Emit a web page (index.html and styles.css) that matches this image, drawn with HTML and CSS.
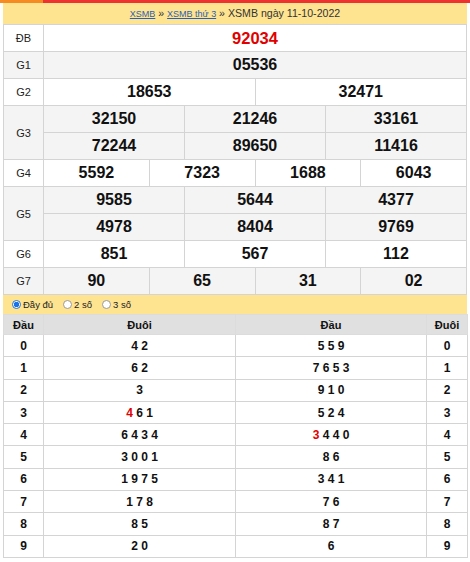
FILE: index.html
```html
<!DOCTYPE html>
<html lang="vi">
<head>
<meta charset="utf-8">
<title>XSMB ngày 11-10-2022</title>
<link rel="stylesheet" href="styles.css">
</head>
<body>
<div class="topbar"><span class="tb-orange"></span><span class="tb-red"></span></div>
<div class="wrap">
  <div class="crumb"><a href="#">XSMB</a> » <a href="#">XSMB thứ 3</a> » XSMB ngày 11-10-2022</div>
  <table class="kq">
    <colgroup>
      <col class="c-lbl">
      <col><col><col><col><col><col><col><col><col><col><col><col>
    </colgroup>
    <tr>
      <td class="lbl">ĐB</td>
      <td colspan="12" class="db">92034</td>
    </tr>
    <tr class="alt">
      <td class="lbl">G1</td>
      <td colspan="12">05536</td>
    </tr>
    <tr>
      <td class="lbl">G2</td>
      <td colspan="6">18653</td>
      <td colspan="6">32471</td>
    </tr>
    <tr class="alt">
      <td class="lbl" rowspan="2">G3</td>
      <td colspan="4">32150</td>
      <td colspan="4">21246</td>
      <td colspan="4">33161</td>
    </tr>
    <tr class="alt">
      <td colspan="4">72244</td>
      <td colspan="4">89650</td>
      <td colspan="4">11416</td>
    </tr>
    <tr>
      <td class="lbl">G4</td>
      <td colspan="3">5592</td>
      <td colspan="3">7323</td>
      <td colspan="3">1688</td>
      <td colspan="3">6043</td>
    </tr>
    <tr class="alt">
      <td class="lbl" rowspan="2">G5</td>
      <td colspan="4">9585</td>
      <td colspan="4">5644</td>
      <td colspan="4">4377</td>
    </tr>
    <tr class="alt">
      <td colspan="4">4978</td>
      <td colspan="4">8404</td>
      <td colspan="4">9769</td>
    </tr>
    <tr>
      <td class="lbl">G6</td>
      <td colspan="4">851</td>
      <td colspan="4">567</td>
      <td colspan="4">112</td>
    </tr>
    <tr class="alt">
      <td class="lbl">G7</td>
      <td colspan="3">90</td>
      <td colspan="3">65</td>
      <td colspan="3">31</td>
      <td colspan="3">02</td>
    </tr>
  </table>
  <div class="opts">
    <label class="opt"><span class="radio on"></span>Đầy đủ</label>
    <label class="opt"><span class="radio"></span>2 số</label>
    <label class="opt"><span class="radio"></span>3 số</label>
  </div>
  <table class="lt">
    <colgroup>
      <col class="w-d"><col class="w-m"><col class="w-m2"><col class="w-d2">
    </colgroup>
    <tr><th>Đầu</th><th>Đuôi</th><th class="sep">Đầu</th><th>Đuôi</th></tr>
    <tr><td>0</td><td>4 2</td><td class="sep">5 5 9</td><td>0</td></tr>
    <tr><td>1</td><td>6 2</td><td class="sep">7 6 5 3</td><td>1</td></tr>
    <tr><td>2</td><td>3</td><td class="sep">9 1 0</td><td>2</td></tr>
    <tr><td>3</td><td><span class="red">4</span> 6 1</td><td class="sep">5 2 4</td><td>3</td></tr>
    <tr><td>4</td><td>6 4 3 4</td><td class="sep"><span class="red">3</span> 4 4 0</td><td>4</td></tr>
    <tr><td>5</td><td>3 0 0 1</td><td class="sep">8 6</td><td>5</td></tr>
    <tr><td>6</td><td>1 9 7 5</td><td class="sep">3 4 1</td><td>6</td></tr>
    <tr><td>7</td><td>1 7 8</td><td class="sep">7 6</td><td>7</td></tr>
    <tr><td>8</td><td>8 5</td><td class="sep">8 7</td><td>8</td></tr>
    <tr><td>9</td><td>2 0</td><td class="sep">6</td><td>9</td></tr>
  </table>
</div>
</body>
</html>
```

FILE: styles.css
```css
* { box-sizing: border-box; }
body {
  margin: 0;
  background: #fff;
  font-family: "Liberation Sans", Arial, sans-serif;
  color: #000;
}
.topbar { display: flex; height: 3px; }
.tb-orange { width: 43px; background: #f58b22; }
.tb-red { flex: 1; background: #ee3131; }

.wrap { margin: 0 3px; width: 464px; }

.crumb {
  height: 21px;
  line-height: 21px;
  background: #fee391;
  text-align: center;
  font-size: 10.6px;
  color: #333;
}
.crumb a { color: #2b5fb3; font-size: 9px; text-decoration: underline; }

.kq {
  width: 464px;
  border-collapse: collapse;
  table-layout: fixed;
}
.kq .c-lbl { width: 40px; }
.kq td {
  border: 1px solid #d4d4d4;
  height: 27px;
  padding: 0;
  text-align: center;
  vertical-align: middle;
  font-weight: bold;
  font-size: 16px;
  color: #111;
  background: #fff;
}
.kq tr.alt td { background: #f4f4f4; }
.kq td.lbl { font-weight: normal; font-size: 11px; color: #222; }
.kq td.db { color: #e00000; font-size: 16.5px; }

.opts {
  height: 19px;
  background: #fee391;
  display: flex;
  align-items: center;
  padding-left: 9px;
  gap: 10px;
  font-size: 9.5px;
  color: #222;
}
.opt { display: flex; align-items: center; gap: 2px; }
.radio {
  width: 9px;
  height: 9px;
  border-radius: 50%;
  border: 1px solid #9a9a9a;
  background: #fff;
}
.radio.on {
  border: 1px solid #1a73e8;
  background: radial-gradient(circle, #1a73e8 0 2.5px, #fff 3px);
}

.lt {
  width: 464px;
  border-collapse: collapse;
  table-layout: fixed;
}
.lt .w-d { width: 40px; }
.lt .w-m { width: 192px; }
.lt .w-m2 { width: 191px; }
.lt .w-d2 { width: 41px; }
.lt th {
  height: 20px;
  background: #e0e0e0;
  border: 1px solid #dcdcdc;
  font-size: 11px;
  font-weight: bold;
  padding: 0;
  color: #111;
}
.lt th.sep { border-left-color: #cfcfcf; }
.lt td {
  height: 22.3px;
  border: 1px solid #d4d4d4;
  padding: 0;
  text-align: center;
  font-size: 12px;
  font-weight: bold;
  color: #111;
}
.red { color: #e00000; }
```
